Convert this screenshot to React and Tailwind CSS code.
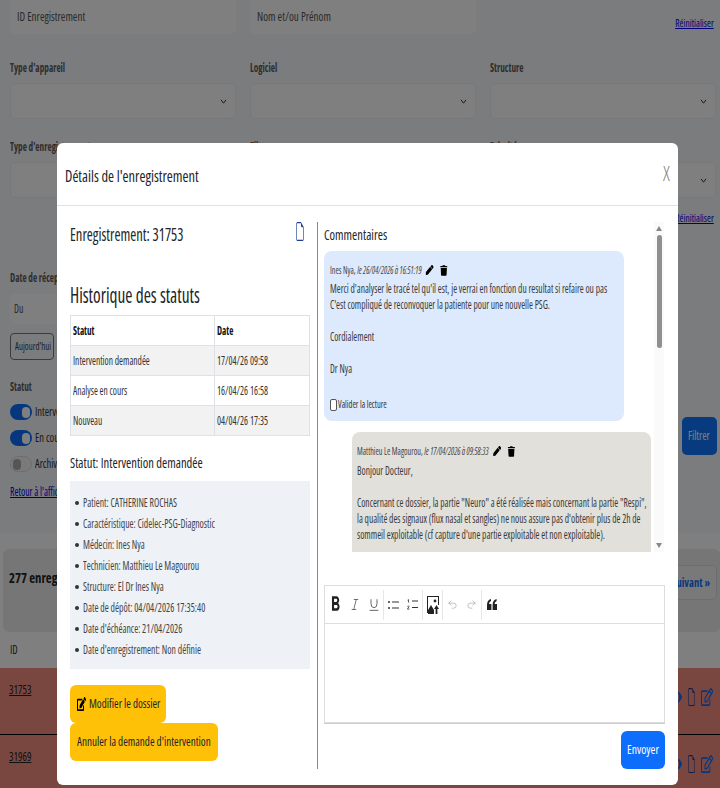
import React from "react";
import { FaEdit, FaPen, FaTrash, FaRegEdit, FaEye } from "react-icons/fa";
import { BsFileEarmark } from "react-icons/bs";
import { MdFormatBold } from "react-icons/md";
import { Undo2, Redo2, Italic, Underline } from "lucide-react";

const T = ({ children, cls = "scale-x-[0.81]" }) => (
  <span className={"inline-block origin-left whitespace-nowrap " + cls}>{children}</span>
);

const Field = ({ label, chevron }) => (
  <div className="flex flex-col">
    <div className="h-[17px] pt-px text-[12px] leading-[16px] font-bold text-[#5c5c5c]"><T cls="scale-x-[0.77]">{label}</T></div>
    <div className="mt-[7px] h-[36px] rounded-[5px] border border-[#f0f0f0] bg-white flex items-center justify-end pr-[8px]">
      {chevron && <svg viewBox="0 0 8 6" className="w-[7px] h-[5px]" fill="none" stroke="#333" strokeWidth="1.2"><path d="M1 1l3 4 3-4" /></svg>}
    </div>
  </div>
);

const Toggle = ({ on, label }) => (
  <div className="flex items-center gap-[3px] h-[26px]">
    <span className={"w-[22px] h-[16px] rounded-full flex items-center px-[2px] " + (on ? "bg-[#0d6efd] justify-end" : "bg-[#f4f4f4] justify-start border border-[#ddd]")}>
      <span className={"w-[8px] h-[11px] rounded-full " + (on ? "bg-white" : "bg-[#aaa]")} />
    </span>
    <span className="text-[13px] text-[#333]"><T>{label}</T></span>
  </div>
);

const Tool = ({ children }) => (
  <span className="w-[19px] h-[28px] flex items-center justify-center">{children}</span>
);

const Sep = () => <span className="w-px h-[30px] bg-[#e6e6e6]" />;

const Row = ({ id, border }) => (
  <div className={"h-[67px] bg-[#f58d80] flex justify-between pl-[9px] pr-[7px] " + (border ? "border-b border-black" : "")}>
    <span className="mt-[13px] text-[13px] leading-[16px] text-[#222]"><T cls="scale-x-[0.81] underline">{id}</T></span>
    <span className="flex items-center gap-[5px] mt-[4px] h-[50px] text-[#0d6efd]">
      <FaEye preserveAspectRatio="none" className="w-[12px] h-[16px]" />
      <BsFileEarmark preserveAspectRatio="none" className="w-[9px] h-[18px] text-[#1d3f8f]" />
      <FaRegEdit preserveAspectRatio="none" className="w-[12px] h-[18px]" />
    </span>
  </div>
);

const LI = ({ children }) => (
  <li className="h-[21px] leading-[21px] flex text-[12px] text-[#444]">
    <span className="w-[4px] h-[4px] rounded-full bg-[#333] mt-[9px] ml-[3px] mr-[4px] shrink-0" />
    <T>{children}</T>
  </li>
);

const Cell = ({ children, head }) => (
  <td className={"border border-[#dee2e6] pl-[2px] " + (head ? "font-bold text-[#111]" : "")}><T cls={head ? "scale-x-[0.76]" : "scale-x-[0.79]"}>{children}</T></td>
);

const Line = ({ children }) => <T cls="block w-max scale-x-[0.79]">{children}</T>;

export default function App() {
  return (
    <div className="relative w-[720px] h-[788px] overflow-hidden bg-white text-[#212529] font-['Open_Sans','Noto_Sans',sans-serif] [font-stretch:75%]">
      {/* Page behind the dialog */}
      <div className="bg-[#f6f8fc] h-[543px] pl-[10px] pr-[4px] -mt-[10px] flex flex-col">
        <div className="grid grid-cols-[226px_226px_226px] gap-x-[14px]">
          <div className="h-[44px] rounded-[5px] bg-white flex items-center pl-[7px] pt-[10px] text-[13px] text-[#555]"><T cls="scale-x-[0.85]">ID Enregistrement</T></div>
          <div className="h-[44px] rounded-[5px] bg-white flex items-center pl-[7px] pt-[10px] text-[13px] text-[#555]"><T cls="scale-x-[0.85]">Nom et/ou Prénom</T></div>
          <div className="flex items-end justify-end pr-[2px] pb-[3px]"><a className="text-[11px] leading-[16px] underline text-[#0000ee] scale-x-[0.86] origin-right whitespace-nowrap">Réinitialiser</a></div>
        </div>
        <div className="grid grid-cols-[226px_226px_226px] gap-x-[14px] mt-[25px]">
          <Field label="Type d'appareil" chevron />
          <Field label="Logiciel" chevron />
          <Field label="Structure" chevron />
        </div>
        <div className="grid grid-cols-[226px_226px_226px] gap-x-[14px] mt-[19px]">
          <Field label="Type d'enregistrement" chevron />
          <Field label="Filtre" chevron />
          <Field label="Priorité" chevron />
        </div>
        <div className="flex justify-end pr-[2px] mt-[12px]"><a className="text-[11px] leading-[16px] underline text-[#0000ee] scale-x-[0.86] origin-right whitespace-nowrap">Réinitialiser</a></div>
        <div className="flex justify-between mt-[44px]">
          <div className="w-[226px] flex flex-col">
            <div className="h-[16px] text-[12px] leading-[16px] font-bold text-[#5c5c5c]"><T cls="scale-x-[0.77]">Date de réception</T></div>
            <div className="mt-[8px] h-[30px] rounded-[5px] bg-white flex items-center pl-[4px] text-[12px] text-[#555]"><T>Du</T></div>
            <div className="mt-[9px] w-[44px] h-[27px] rounded-[4px] border border-[#777] flex items-center pl-[4px] text-[11px] text-[#444]"><T>Aujourd'hui</T></div>
            <div className="mt-[19px] h-[16px] text-[12px] leading-[16px] font-bold text-[#5c5c5c]"><T cls="scale-x-[0.77]">Statut</T></div>
            <div className="mt-[4px] flex flex-col">
              <Toggle on label="Intervention demandée" />
              <Toggle on label="En cours" />
              <Toggle label="Archivé" />
            </div>
            <a className="mt-[7px] text-[12px] leading-[16px] text-[#0000ee]"><T cls="scale-x-[0.81] underline">Retour à l'affichage</T></a>
          </div>
          <div className="self-end mb-[45px] mr-[-1px] w-[35px] h-[38px] rounded-[5px] bg-[#0f74fe] text-white text-[13px] flex items-center pl-[6px]"><T>Filtrer</T></div>
        </div>
      </div>
      <div className="mt-[16px] h-[83px] rounded-[6px] bg-[#ececec] ml-[3px] flex items-start justify-between pr-[3px] pl-[6px] pt-[16px]">
        <span className="mt-[2px] text-[15px] leading-[20px] font-bold text-[#222]"><T cls="scale-x-[0.85]">277 enregistrements</T></span>
        <span className="w-[70px] h-[35px] rounded-[5px] border border-[#ddd] bg-[#f2f2f2] flex items-center justify-end pr-[6px] text-[13px] font-bold text-[#0d6efd]"><span className="whitespace-nowrap scale-x-[0.81] origin-right">Suivant »</span></span>
      </div>
      <div className="h-[36px] pl-[10px] flex items-center text-[13px] text-[#333]"><T>ID</T></div>
      <Row id="31753" border />
      <Row id="31969" />

      {/* Backdrop */}
      <div className="absolute inset-0 bg-black/50" />

      {/* Dialog */}
      <div className="absolute left-[57px] top-[143px] w-[621px] h-[642px] rounded-[6px] bg-white flex flex-col">
        <div className="h-[63px] shrink-0 border-b border-[#dee2e6] flex items-center justify-between pl-[8px] pr-[8px]">
          <span className="text-[17px] pt-[4px] text-[#212529]"><T cls="scale-x-[0.85]">Détails de l'enregistrement</T></span>
          <span className="text-[20px] font-light text-[#888]">X</span>
        </div>
        <div className="flex pl-[13px] pt-[16px]">
          {/* Left column */}
          <div className="w-[248px] h-[547px] border-r border-[#888] flex flex-col shrink-0">
            <div className="w-[240px] flex items-start justify-between">
              <span className="text-[18px] leading-[26px] -mt-px text-[#212529]"><T>Enregistrement: 31753</T></span>
              <BsFileEarmark preserveAspectRatio="none" className="w-[10px] h-[19px] text-[#1d3f8f] mr-[5px]" />
            </div>
            <h2 className="mt-[33px] text-[22px] leading-[28px] text-[#212529]"><T cls="scale-x-[0.79]">Historique des statuts</T></h2>
            <table className="mt-[7px] w-[240px] border-collapse text-[12px] text-[#333]">
              <tbody>
                <tr className="h-[30px] bg-white"><td className="w-[144px] border border-[#dee2e6] pl-[2px] font-bold text-[#111]"><T cls="scale-x-[0.76]">Statut</T></td><Cell head>Date</Cell></tr>
                <tr className="h-[30px] bg-[#f2f2f2]"><Cell>Intervention demandée</Cell><Cell>17/04/26 09:58</Cell></tr>
                <tr className="h-[30px] bg-white"><Cell>Analyse en cours</Cell><Cell>16/04/26 16:58</Cell></tr>
                <tr className="h-[30px] bg-[#f2f2f2]"><Cell>Nouveau</Cell><Cell>04/04/26 17:35</Cell></tr>
              </tbody>
            </table>
            <h3 className="mt-[15px] text-[15px] leading-[22px] text-[#212529]"><T cls="scale-x-[0.84]">Statut: Intervention demandée</T></h3>
            <ul className="mt-[8px] w-[240px] h-[188px] bg-[#eef1f6] pt-[11px] pl-[2px]">
              <LI>Patient: CATHERINE ROCHAS</LI>
              <LI>Caractéristique: Cidelec-PSG-Diagnostic</LI>
              <LI>Médecin: Ines Nya</LI>
              <LI>Technicien: Matthieu Le Magourou</LI>
              <LI>Structure: El Dr Ines Nya</LI>
              <LI>Date de dépôt: 04/04/2026 17:35:40</LI>
              <LI>Date d'échéance: 21/04/2026</LI>
              <LI>Date d'enregistrement: Non définie</LI>
            </ul>
            <div className="mt-[16px] flex flex-col items-start">
              <button className="h-[38px] w-[96px] rounded-[6px] bg-[#ffc107] flex items-center pl-[7px] gap-[3px] text-[13px] text-[#212529]">
                <FaEdit preserveAspectRatio="none" className="w-[9px] h-[14px] text-black shrink-0" /><T cls="scale-x-[0.85]">Modifier le dossier</T>
              </button>
              <button className="h-[38px] w-[148px] rounded-[6px] bg-[#ffc107] flex items-center pl-[7px] text-[13px] text-[#212529]"><T cls="scale-x-[0.855]">Annuler la demande d'intervention</T></button>
            </div>
          </div>
          {/* Right column */}
          <div className="ml-[6px] w-[341px] shrink-0 flex flex-col">
            <div className="h-[330px] flex">
              <div className="w-[330px] h-[330px] overflow-hidden flex flex-col shrink-0">
                <div className="h-[29px] shrink-0 text-[15px] leading-[24px] text-[#212529]"><T cls="scale-x-[0.84]">Commentaires</T></div>
                <div className="w-[300px] h-[170px] shrink-0 rounded-[8px] bg-[#dde9fc] pl-[6px] pt-[11px] overflow-hidden">
                  <div className="h-[16px] flex items-center w-max origin-left scale-x-[0.81] text-[10px] text-[#444]">Ines Nya,&nbsp;<i>le 26/04/2026 à 16:51:19</i>
                    <FaPen className="ml-[5px] w-[10px] h-[10px] text-black" />
                    <FaTrash className="ml-[8px] w-[9px] h-[11px] text-black" />
                  </div>
                  <div className="mt-[3px] text-[12px] leading-[16px] text-[#3a3a3a]">
                    <Line>Merci d'analyser le tracé tel qu'il est, je verrai en fonction du resultat si refaire ou pas</Line>
                    <Line>C'est compliqué de reconvoquer la patiente pour une nouvelle PSG.</Line>
                    <div className="h-[16px]" />
                    <Line>Cordialement</Line>
                    <div className="h-[16px]" />
                    <Line>Dr Nya</Line>
                  </div>
                  <div className="mt-[20px] flex items-center text-[10px] text-[#333]">
                    <span className="w-[7px] h-[12px] rounded-[2px] border border-[#555] bg-white mr-px shrink-0" /><T cls="scale-x-[0.84]">Valider la lecture</T>
                  </div>
                </div>
                <div className="ml-[28px] mt-[11px] w-[299px] h-[160px] shrink-0 rounded-t-[8px] bg-[#e2e0db] pl-[5px] pt-[11px] overflow-hidden">
                  <div className="h-[16px] flex items-center w-max origin-left scale-x-[0.81] text-[10px] text-[#444]">Matthieu Le Magourou,&nbsp;<i>le 17/04/2026 à 09:58:33</i>
                    <FaPen className="ml-[6px] w-[10px] h-[10px] text-black" />
                    <FaTrash className="ml-[8px] w-[9px] h-[11px] text-black" />
                  </div>
                  <div className="mt-[4px] text-[12px] leading-[16px] text-[#3a3a3a]">
                    <Line>Bonjour Docteur,</Line>
                    <div className="h-[16px]" />
                    <Line>Concernant ce dossier, la partie "Neuro" a été réalisée mais concernant la partie "Respi",</Line>
                    <Line>la qualité des signaux (flux nasal et sangles) ne nous assure pas d'obtenir plus de 2h de</Line>
                    <Line>sommeil exploitable (cf capture d'une partie exploitable et non exploitable).</Line>
                  </div>
                </div>
              </div>
              <div className="w-[10px] h-[330px] bg-[#fafafa] flex flex-col items-center">
                <svg viewBox="0 0 6 5" className="w-[6px] h-[5px] mt-[4px]" fill="#888"><path d="M3 0l3 5H0z" /></svg>
                <div className="mt-[4px] w-[5px] h-[113px] rounded-full bg-[#8f8f8f]" />
                <div className="flex-1" />
                <svg viewBox="0 0 6 5" className="w-[6px] h-[5px] mb-[4px]" fill="#888"><path d="M3 5l3-5H0z" /></svg>
              </div>
            </div>
            <div className="mt-[33px] h-[138px] border border-[#ddd] shadow-[0_1px_0_#ccc] flex flex-col">
              <div className="h-[38px] shrink-0 border-b border-[#ddd] flex items-center pl-[1px] text-[#222]">
                <Tool><MdFormatBold preserveAspectRatio="none" className="w-[17px] h-[25px]" /></Tool>
                <Tool><Italic strokeWidth={1.4} preserveAspectRatio="none" className="w-[10px] h-[15px] text-[#444]" /></Tool>
                <Tool><Underline strokeWidth={1.4} preserveAspectRatio="none" className="w-[12px] h-[16px] text-[#444]" /></Tool>
                <Sep />
                <Tool>
                  <svg viewBox="0 0 11 10" className="w-[11px] h-[10px]" fill="#333"><rect x="0" y="1" width="2" height="2" rx="1" /><rect x="0" y="7" width="2" height="2" rx="1" /><rect x="4" y="1.5" width="7" height="1" /><rect x="4" y="7.5" width="7" height="1" /></svg>
                </Tool>
                <Tool>
                  <svg viewBox="0 0 11 11" className="w-[11px] h-[11px]" fill="none" stroke="#333" strokeWidth="0.8"><path d="M0.6 1.2l.9-.6v3M0.4 7.5q1-1 1.8 0l-1.8 2.6h2" /><path d="M5 2h6M5 8.5h6" strokeWidth="1" /></svg>
                </Tool>
                <Sep />
                <Tool>
                  <svg viewBox="0 0 12 18" preserveAspectRatio="none" className="w-[12px] h-[18px]" fill="#222">
                    <path d="M0 0h12v9h-1V1H1v16H0z" />
                    <circle cx="8" cy="5" r="1.4" />
                    <path d="M1 18v-4l3-5 3 5v4z" />
                    <path d="M9.5 9l2.5 4h-1.6v5H8.6v-5H7z" />
                  </svg>
                </Tool>
                <Sep />
                <Tool><Undo2 strokeWidth={1.3} className="w-[11px] h-[13px] text-[#999]" /></Tool>
                <Tool><Redo2 strokeWidth={1.3} className="w-[11px] h-[13px] text-[#999]" /></Tool>
                <Sep />
                <Tool>
                  <svg viewBox="0 0 10 11" className="w-[10px] h-[11px]" fill="#222"><path d="M0 11V6Q0 1 4 0v2Q2 3 2 5h2.4v6zM5.6 11V6Q5.6 1 9.6 0v2Q7.6 3 7.6 5H10v6z" /></svg>
                </Tool>
              </div>
              <div className="flex-1 bg-white" />
            </div>
            <div className="mt-[8px] flex justify-end">
              <button className="w-[44px] h-[38px] rounded-[6px] bg-[#0d6efd] text-white text-[13px] flex items-center pl-[6px]"><T cls="scale-x-[0.9]">Envoyer</T></button>
            </div>
          </div>
        </div>
      </div>
    </div>
  );
}
